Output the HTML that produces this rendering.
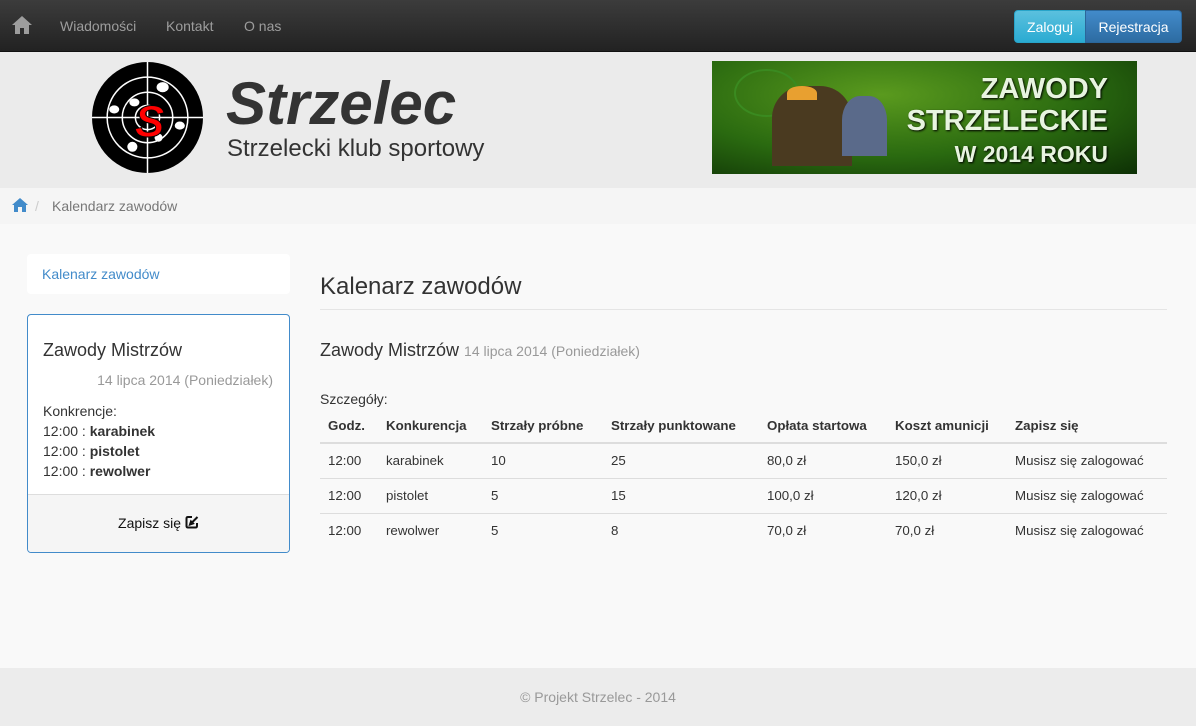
<!DOCTYPE html>
<html><head><meta charset="utf-8"><style>
*{box-sizing:border-box;margin:0;padding:0}
body{width:1196px;height:726px;overflow:hidden;background:#f9f9f9;font-family:"Liberation Sans",sans-serif;font-size:14px;color:#333;position:relative}
.nav{position:absolute;left:0;top:0;width:1196px;height:52px;background:linear-gradient(#3c3c3c,#222);border-bottom:1px solid #111}
.nav a{position:absolute;top:18px;color:#9d9d9d;font-size:14px;text-decoration:none}
.btn{position:absolute;top:10px;height:33px;color:#fff;font-size:14px;line-height:32px;text-align:center}
.hdr{position:absolute;top:52px;left:0;width:1196px;height:136px;background:#ebebeb}
.bc{position:absolute;top:188px;left:0;width:1196px;height:36px;background:#f5f5f5}
.foot{position:absolute;top:668px;left:0;width:1196px;height:58px;background:#ececec;text-align:center;color:#999;line-height:58px}
table{position:absolute;left:320px;top:408px;width:847px;border-collapse:collapse;font-size:13.3px}
th{text-align:left;font-weight:bold;padding:0 8px;height:35px;border-bottom:2px solid #ddd}
td{padding:0 8px;height:35px;border-top:1px solid #ddd}
</style></head><body>
<div class="nav">
<svg style="position:absolute;left:11px;top:15px" width="22" height="20" viewBox="0 0 22 20"><path d="M11 1 L1 10 H4 V19 H9 V13 H13 V19 H18 V10 H21 Z" fill="#9d9d9d"/></svg>
<a style="left:60px">Wiadomości</a><a style="left:166px">Kontakt</a><a style="left:244px">O nas</a>
<div class="btn" style="left:1014px;width:72px;background:linear-gradient(#5bc0de,#2aabd2);border:1px solid #28a4c9;border-radius:4px 0 0 4px">Zaloguj</div>
<div class="btn" style="left:1085px;width:97px;background:linear-gradient(#428bca,#2d6ca2);border:1px solid #2b669a;border-radius:0 4px 4px 0">Rejestracja</div>
</div>
<div class="hdr">
<svg style="position:absolute;left:92px;top:10px" width="111" height="111" viewBox="0 0 110 110">
<circle cx="55" cy="55" r="55" fill="#000"/>
<circle cx="55" cy="55" r="40" fill="none" stroke="#fff" stroke-width="1.5"/>
<circle cx="55" cy="55" r="25" fill="none" stroke="#fff" stroke-width="1.5"/>
<circle cx="55" cy="55" r="12" fill="none" stroke="#fff" stroke-width="1.5"/>
<line x1="0" y1="55" x2="110" y2="55" stroke="#fff" stroke-width="1.5"/>
<line x1="55" y1="0" x2="55" y2="110" stroke="#fff" stroke-width="1.5"/>
<ellipse cx="70" cy="25" rx="6" ry="5" fill="#fff"/><ellipse cx="42" cy="40" rx="5" ry="4" fill="#fff"/>
<ellipse cx="22" cy="47" rx="5" ry="4" fill="#fff"/><ellipse cx="87" cy="63" rx="5" ry="4" fill="#fff"/>
<ellipse cx="40" cy="84" rx="5" ry="5" fill="#fff"/><ellipse cx="66" cy="75" rx="4" ry="4" fill="#fff"/>
<text x="57" y="74" text-anchor="middle" font-family="Liberation Sans" font-weight="bold" font-style="italic" font-size="44" fill="#f00" stroke="#000" stroke-width="1">S</text>
</svg>
<div style="position:absolute;left:226px;top:17px;font-size:60px;font-weight:bold;font-style:italic;color:#333;line-height:70px">Strzelec</div>
<div style="position:absolute;left:227px;top:83px;font-size:24px;color:#333">Strzelecki klub sportowy</div>
<div style="position:absolute;left:712px;top:9px;width:425px;height:113px;background:radial-gradient(ellipse at 40% 30%,#5a9a1e,#2a6a10 55%,#0d3005);overflow:hidden">
<div style="position:absolute;left:22px;top:8px;width:65px;height:48px;border:2px solid #3a8a20;border-radius:50%"></div>
<div style="position:absolute;left:60px;top:25px;width:80px;height:80px;background:#4a3a20;border-radius:40% 40% 0 0"></div>
<div style="position:absolute;left:75px;top:25px;width:30px;height:14px;background:#e8a030;border-radius:50% 50% 0 0"></div>
<div style="position:absolute;left:130px;top:35px;width:45px;height:60px;background:#5a6a8a;border-radius:40% 40% 0 0"></div>
<div style="position:absolute;left:160px;top:12px;width:236px;text-align:right;font-weight:bold;color:#e8f4e0;font-size:29px;line-height:32px;text-shadow:1px 1px 2px #000">ZAWODY<br>STRZELECKIE<br><span style="font-size:23px">W 2014 ROKU</span></div>
</div>
</div>
<div class="bc">
<svg style="position:absolute;left:12px;top:10px" width="16" height="14" viewBox="0 0 16 14"><path d="M8 0 L0 7 H2 V14 H6 V9 H10 V14 H14 V7 H16 Z" fill="#428bca"/></svg>
<span style="position:absolute;left:35px;top:10px;color:#ccc">/</span>
<span style="position:absolute;left:52px;top:10px;color:#777">Kalendarz zawodów</span>
</div>
<div style="position:absolute;left:27px;top:254px;width:263px;height:40px;background:#fff;border-radius:4px;padding:12px 15px;color:#428bca">Kalenarz zawodów</div>
<div style="position:absolute;left:27px;top:314px;width:263px;height:239px;background:#fff;border:1px solid #428bca;border-radius:4px;overflow:hidden">
<div style="position:absolute;left:15px;top:25px;font-size:18px">Zawody Mistrzów</div>
<div style="position:absolute;right:16px;top:57px;color:#999">14 lipca 2014 (Poniedziałek)</div>
<div style="position:absolute;left:15px;top:86px;line-height:20px">Konkrencje:<br>12:00 : <b>karabinek</b><br>12:00 : <b>pistolet</b><br>12:00 : <b>rewolwer</b></div>
<div style="position:absolute;left:0;top:179px;width:100%;height:60px;background:#f5f5f5;border-top:1px solid #ddd;text-align:center;line-height:57px;color:#111">Zapisz się <svg width="14" height="14" viewBox="0 0 14 14" style="vertical-align:-1px"><path d="M7 2 H3 Q1.5 2 1.5 3.5 V11 Q1.5 12.5 3 12.5 H10.5 Q12 12.5 12 11 V8" fill="none" stroke="#111" stroke-width="2"/><path d="M6 8.5 L12.5 2 M5 9.5 L6 6.5 L8 8.5 Z" stroke="#111" stroke-width="2"/></svg></div>
</div>
<div style="position:absolute;left:320px;top:273px;font-size:24px">Kalenarz zawodów</div>
<div style="position:absolute;left:320px;top:309px;width:847px;border-top:1px solid #e5e5e5"></div>
<div style="position:absolute;left:320px;top:340px;font-size:18px">Zawody Mistrzów <span style="font-size:14px;color:#999">14 lipca 2014 (Poniedziałek)</span></div>
<div style="position:absolute;left:320px;top:391px">Szczegóły:</div>
<table>
<tr><th style="width:58px">Godz.</th><th style="width:105px">Konkurencja</th><th style="width:120px">Strzały próbne</th><th style="width:156px">Strzały punktowane</th><th style="width:128px">Opłata startowa</th><th style="width:120px">Koszt amunicji</th><th>Zapisz się</th></tr>
<tr><td>12:00</td><td>karabinek</td><td>10</td><td>25</td><td>80,0 zł</td><td>150,0 zł</td><td>Musisz się zalogować</td></tr>
<tr><td>12:00</td><td>pistolet</td><td>5</td><td>15</td><td>100,0 zł</td><td>120,0 zł</td><td>Musisz się zalogować</td></tr>
<tr><td>12:00</td><td>rewolwer</td><td>5</td><td>8</td><td>70,0 zł</td><td>70,0 zł</td><td>Musisz się zalogować</td></tr>
</table>
<div class="foot">© Projekt Strzelec - 2014</div>
</body></html>
